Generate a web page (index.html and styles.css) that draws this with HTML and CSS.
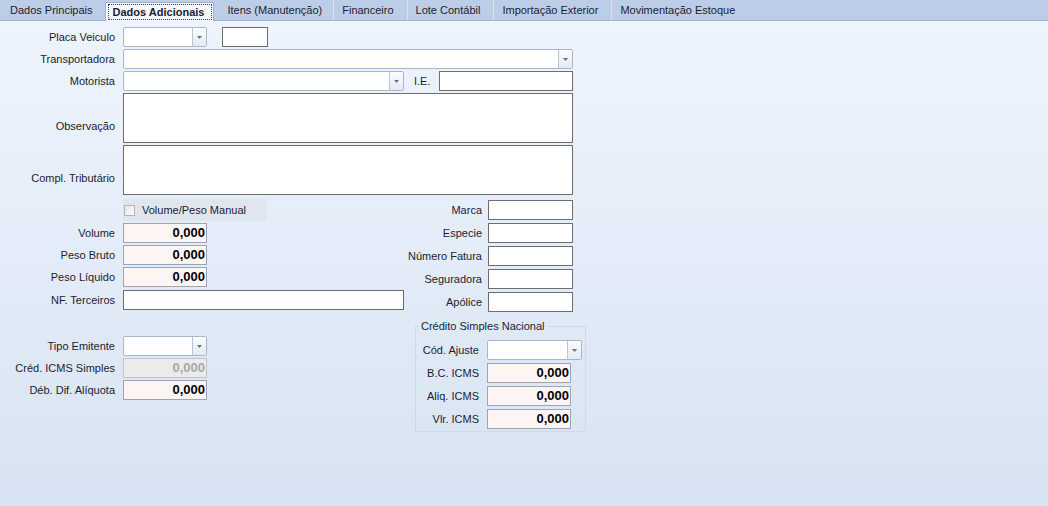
FILE: index.html
```html
<!DOCTYPE html>
<html lang="pt-BR">

<head>
    <meta charset="UTF-8">
    <title>Dados Adicionais</title>
    <link rel="stylesheet" href="styles.css">
</head>

<body>
    <div class="tabs">
        <div class="tab first">Dados Principais</div>
        <div class="tab active"><span class="focus">Dados Adicionais</span></div>
        <div class="tab after-active">Itens (Manutenção)</div>
        <div class="tab">Financeiro</div>
        <div class="tab">Lote Contábil</div>
        <div class="tab">Importação Exterior</div>
        <div class="tab">Movimentação Estoque</div>
    </div>

    <div class="panel">
        <div class="row">
            <span class="lbl">Placa Veiculo</span>
            <div class="combo w84"><span class="btn"><svg width="5" height="3" viewBox="0 0 5 3"><path d="M0 0h5L2.5 3z" fill="#707070"/></svg></span></div>
            <div class="txt placa"></div>
        </div>
        <div class="row">
            <span class="lbl">Transportadora</span>
            <div class="combo w450"><span class="btn"><svg width="5" height="3" viewBox="0 0 5 3"><path d="M0 0h5L2.5 3z" fill="#707070"/></svg></span></div>
        </div>
        <div class="row">
            <span class="lbl">Motorista</span>
            <div class="combo w281"><span class="btn"><svg width="5" height="3" viewBox="0 0 5 3"><path d="M0 0h5L2.5 3z" fill="#707070"/></svg></span></div>
            <span class="lbl-ie">I.E.</span>
            <div class="txt ie"></div>
        </div>
        <div class="row memo-row">
            <span class="lbl low">Observação</span>
            <div class="memo"></div>
        </div>
        <div class="row memo-row">
            <span class="lbl low">Compl. Tributário</span>
            <div class="memo"></div>
        </div>

        <div class="bottom">
            <div class="col-left">
                <div class="check-panel">
                    <span class="check"></span>
                    <span>Volume/Peso Manual</span>
                </div>
                <div class="row">
                    <span class="lbl">Volume</span>
                    <div class="num">0,000</div>
                </div>
                <div class="row">
                    <span class="lbl">Peso Bruto</span>
                    <div class="num">0,000</div>
                </div>
                <div class="row">
                    <span class="lbl">Peso Líquido</span>
                    <div class="num">0,000</div>
                </div>
                <div class="row nf">
                    <span class="lbl">NF. Terceiros</span>
                    <div class="txt w281"></div>
                </div>

                <div class="row tipo">
                    <span class="lbl">Tipo Emitente</span>
                    <div class="combo w84"><span class="btn"><svg width="5" height="3" viewBox="0 0 5 3"><path d="M0 0h5L2.5 3z" fill="#707070"/></svg></span></div>
                </div>
                <div class="row">
                    <span class="lbl">Créd. ICMS Simples</span>
                    <div class="num disabled">0,000</div>
                </div>
                <div class="row">
                    <span class="lbl">Déb. Dif. Alíquota</span>
                    <div class="num">0,000</div>
                </div>
            </div>

            <div class="col-right">
                <div class="rrow">
                    <span class="rlbl">Marca</span>
                    <div class="txt w85"></div>
                </div>
                <div class="rrow">
                    <span class="rlbl">Especie</span>
                    <div class="txt w85"></div>
                </div>
                <div class="rrow">
                    <span class="rlbl">Número Fatura</span>
                    <div class="txt w85"></div>
                </div>
                <div class="rrow">
                    <span class="rlbl">Seguradora</span>
                    <div class="txt w85"></div>
                </div>
                <div class="rrow">
                    <span class="rlbl">Apólice</span>
                    <div class="txt w85"></div>
                </div>

                <fieldset class="group">
                    <legend>Crédito Simples Nacional</legend>
                    <div class="grow">
                        <span class="glbl">Cód. Ajuste</span>
                        <div class="combo w95"><span class="btn"><svg width="5" height="3" viewBox="0 0 5 3"><path d="M0 0h5L2.5 3z" fill="#707070"/></svg></span></div>
                    </div>
                    <div class="grow">
                        <span class="glbl">B.C. ICMS</span>
                        <div class="num w95">0,000</div>
                    </div>
                    <div class="grow">
                        <span class="glbl">Aliq. ICMS</span>
                        <div class="num w95">0,000</div>
                    </div>
                    <div class="grow">
                        <span class="glbl">Vlr. ICMS</span>
                        <div class="num w95">0,000</div>
                    </div>
                </fieldset>
            </div>
        </div>
    </div>
</body>

</html>
```

FILE: styles.css
```css
* {
    box-sizing: border-box;
}

body {
    margin: 0;
    width: 1048px;
    height: 506px;
    overflow: hidden;
    display: flex;
    flex-direction: column;
    font-family: "Liberation Sans", Arial, sans-serif;
    font-size: 11px;
    color: #1c1c30;
    background: #d8e4f2;
}

/* tab strip */
.tabs {
    display: flex;
    height: 21px;
    background: #bccee7;
    border-bottom: 1px solid #9fb1cc;
}

.tab {
    line-height: 20px;
    padding: 0 13px 0 8px;
    border-left: 1px solid #d6e1f1;
    white-space: nowrap;
}

.tab.first {
    padding-left: 10px;
    padding-right: 12px;
    border-left: none;
}

.tab.after-active {
    padding-left: 13px;
    padding-right: 11px;
    border-left: none;
}

.tab.active {
    height: 19px;
    margin-top: 2px;
    padding: 0;
    background: #f4f8fd;
    border: 1px solid #a0b0c8;
    border-bottom: none;
    font-weight: bold;
}

.focus {
    display: block;
    height: 16px;
    margin: 1px 1px 0 2px;
    padding: 0 7px 0 4px;
    line-height: 14px;
    border: 1px dotted #404040;
}

/* form body */
.panel {
    flex: 1;
    padding-top: 6px;
    background: linear-gradient(#eef4fd, #d7e3f2);
}

.row {
    display: flex;
    align-items: center;
    height: 20px;
    margin-bottom: 2px;
}

.lbl {
    width: 115px;
    margin-right: 8px;
    text-align: right;
    white-space: nowrap;
}

.combo,
.txt,
.memo,
.num {
    height: 20px;
    background: #fff;
}

.combo {
    display: flex;
    justify-content: flex-end;
    border: 1px solid #a8b7cc;
    border-radius: 2px;
}

.combo .btn {
    width: 14px;
    display: flex;
    align-items: center;
    justify-content: center;
    border-left: 1px solid #b9c6d8;
    border-radius: 0 2px 2px 0;
    background: linear-gradient(#fbfcfe, #e4eaf3);
}

.txt {
    border: 1px solid #6e6e6e;
}

.w84 {
    width: 84px;
}

.w85 {
    width: 85px;
}

.w95 {
    width: 95px;
}

.w281 {
    width: 281px;
}

.w450 {
    width: 450px;
}

.placa {
    width: 46px;
    margin-left: 15px;
}

.lbl-ie {
    margin-left: 10px;
    margin-right: 8px;
}

.ie {
    width: 134px;
}

.memo-row {
    height: 50px;
    align-items: flex-end;
}

.lbl.low {
    margin-bottom: 11px;
}

.memo {
    width: 450px;
    height: 50px;
    border: 1px solid #6e6e6e;
}

.num {
    width: 84px;
    padding-right: 1px;
    border: 1px solid #98a6b8;
    background: #fdf5f4;
    text-align: right;
    font-size: 13px;
    font-weight: bold;
    line-height: 18px;
    color: #000;
}

.num.disabled {
    background: #ebebeb;
    border-color: #bcc5d0;
    color: #a8a8a8;
}

/* lower part: two columns */
.bottom {
    display: flex;
    margin-top: 4px;
}

.col-left {
    width: 404px;
}

.check-panel {
    display: flex;
    align-items: center;
    width: 144px;
    height: 22px;
    margin-left: 123px;
    margin-bottom: 2px;
    background: #e0e6ee;
}

.check {
    width: 11px;
    height: 11px;
    margin: 1px 7px 0 1px;
    border: 1px solid #b4b4b4;
    background: linear-gradient(135deg, #e8e8e8, #fafafa);
}

.row.nf {
    margin-top: 3px;
}

.row.tipo {
    margin-top: 26px;
}

.col-right {
    width: 182px;
    padding-top: 1px;
}

.rrow {
    display: flex;
    align-items: center;
    height: 20px;
    margin-bottom: 3px;
}

.rlbl {
    width: 78px;
    margin-right: 6px;
    text-align: right;
    white-space: nowrap;
}

.group {
    margin: 8px 0 0 11px;
    padding: 0 3px 2px 3px;
    border: 1px solid #d0d9e5;
    min-width: 0;
}

.group legend {
    padding: 0 2px;
    line-height: 13px;
}

.grow {
    display: flex;
    align-items: center;
    height: 20px;
    margin-top: 3px;
}

.grow:first-of-type {
    margin-top: 7px;
}

.glbl {
    width: 60px;
    margin-right: 8px;
    text-align: right;
    white-space: nowrap;
}
```
